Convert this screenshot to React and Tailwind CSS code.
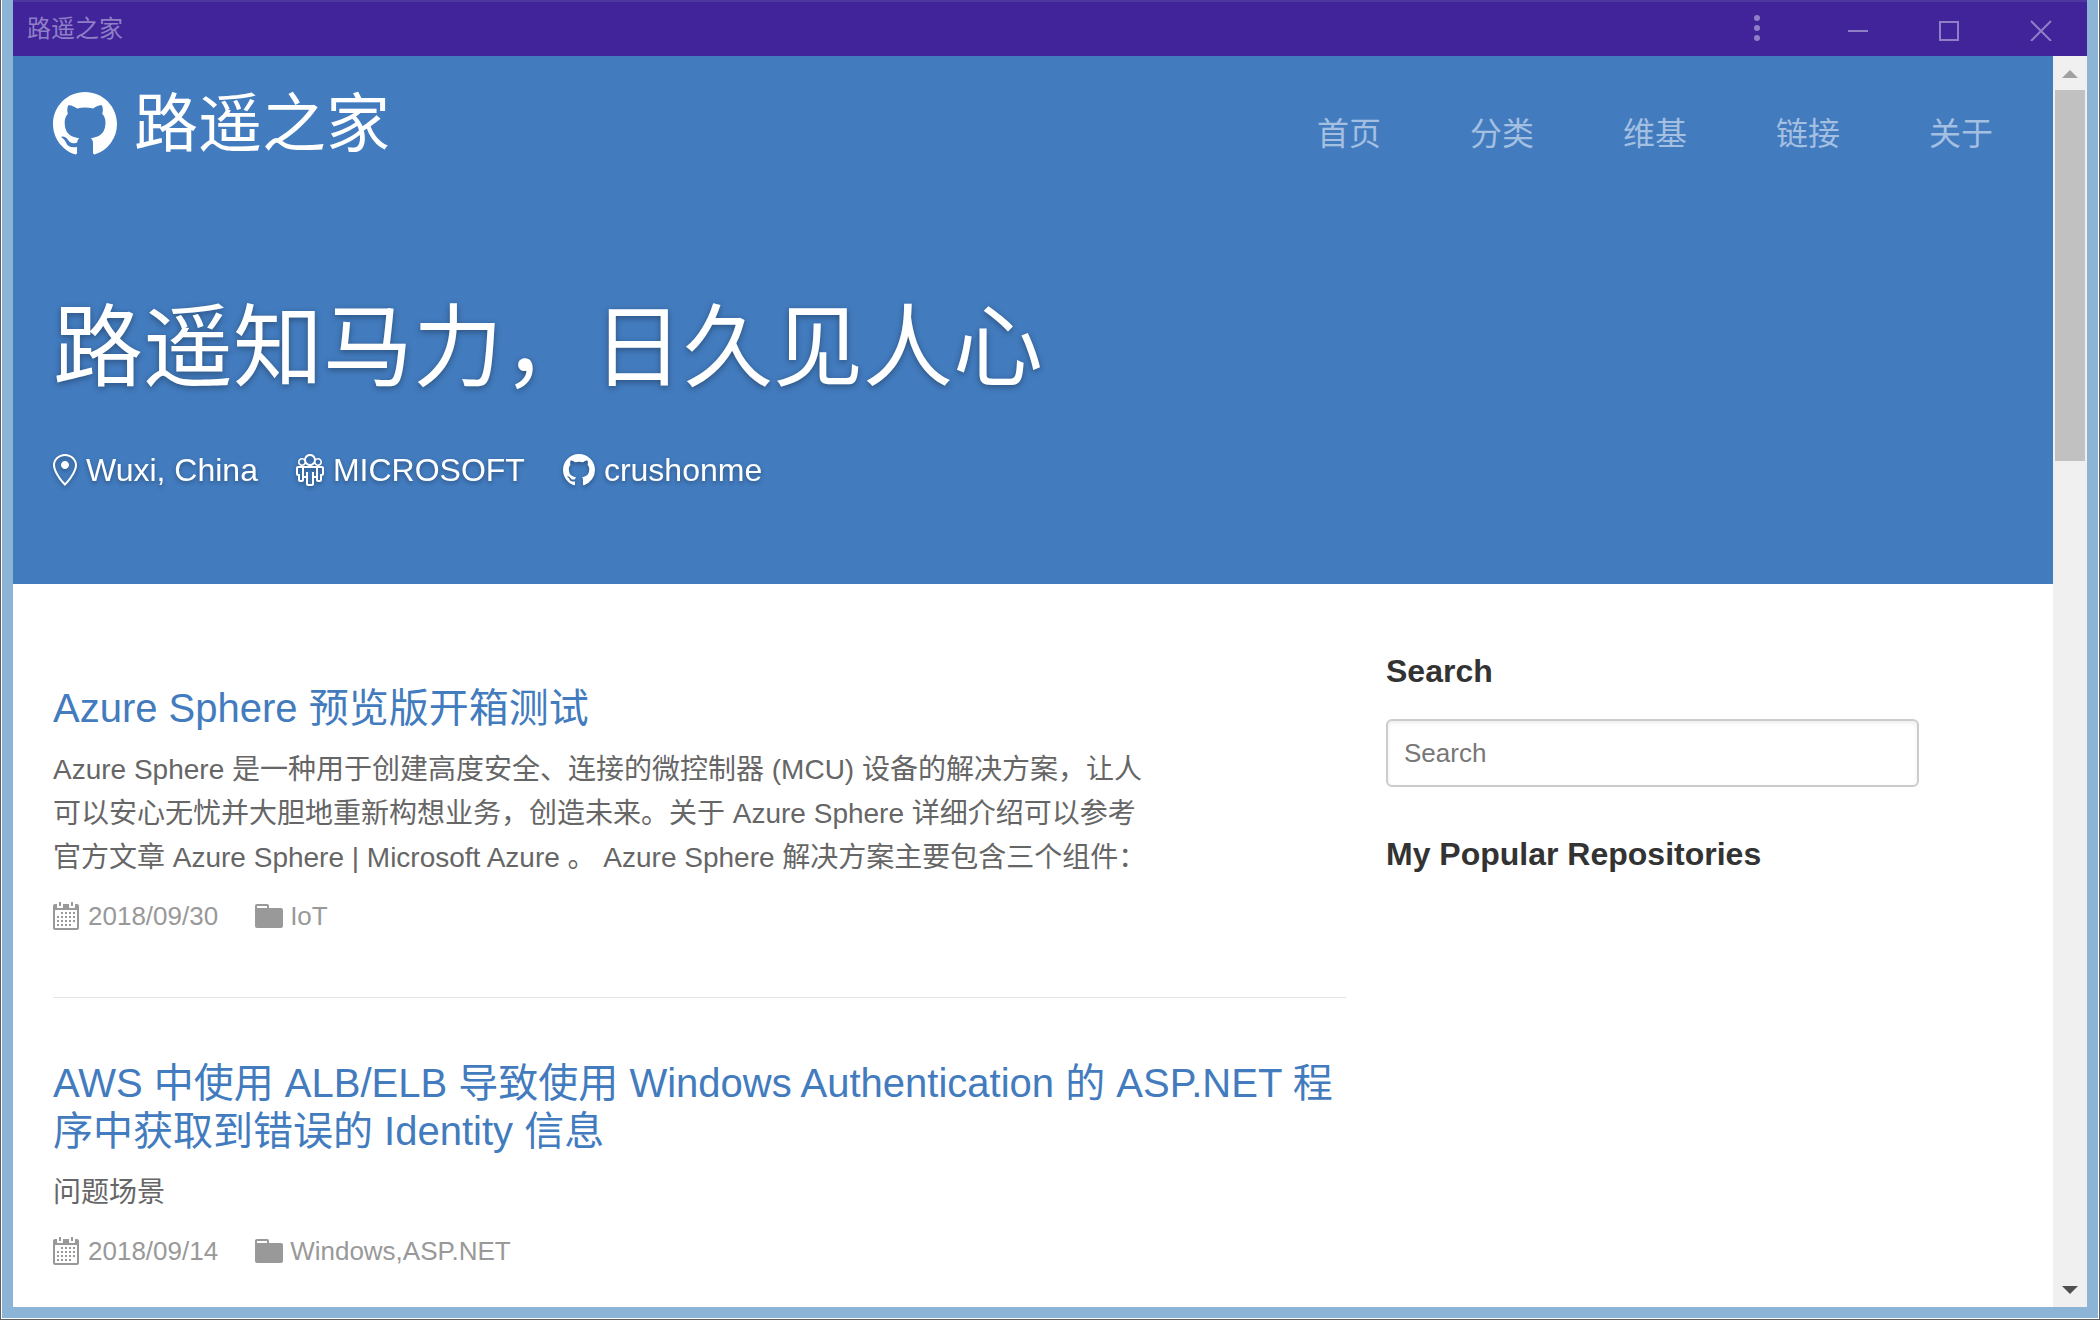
const MARK =
  "M8 0C3.58 0 0 3.58 0 8c0 3.54 2.29 6.53 5.47 7.59.4.07.55-.17.55-.38 0-.19-.01-.82-.01-1.49-2.01.37-2.53-.49-2.69-.94-.09-.23-.48-.94-.82-1.13-.28-.15-.68-.52-.01-.53.63-.01 1.08.58 1.23.82.72 1.21 1.87.87 2.33.66.07-.52.28-.87.51-1.07-1.78-.2-3.64-.89-3.64-3.95 0-.87.31-1.59.82-2.15-.08-.2-.36-1.02.08-2.12 0 0 .67-.21 2.2.82.64-.18 1.32-.27 2-.27.68 0 1.36.09 2 .27 1.53-1.04 2.2-.82 2.2-.82.44 1.1.16 1.92.08 2.12.51.56.82 1.27.82 2.15 0 3.07-1.87 3.75-3.65 3.95.29.25.54.73.54 1.48 0 1.07-.01 1.93-.01 2.2 0 .21.15.46.55.38A8.013 8.013 0 0 0 16 8c0-4.42-3.58-8-8-8z";
const LOCATION =
  "M6 0C2.69 0 0 2.5 0 5.5 0 10.02 6 16 6 16s6-5.98 6-10.5C12 2.5 9.31 0 6 0zm0 14.55C4.14 12.52 1 8.44 1 5.5 1 3.02 3.25 1 6 1c1.34 0 2.61.48 3.56 1.36.92.86 1.44 1.97 1.44 3.14 0 2.94-3.14 7.02-5 9.05zM8 5.5c0 1.11-.89 2-2 2-1.11 0-2-.89-2-2 0-1.11.89-2 2-2 1.11 0 2 .89 2 2z";
const ORGANIZATION =
  "M4.75 4.95C5.3 5.59 6.09 6 7 6c.91 0 1.7-.41 2.25-1.05A1.993 1.993 0 0 0 13 4c0-1.11-.89-2-2-2-.41 0-.77.13-1.08.33A3.01 3.01 0 0 0 7 0C5.58 0 4.39 1 4.08 2.33 3.77 2.13 3.41 2 3 2c-1.11 0-2 .89-2 2a1.993 1.993 0 0 0 3.75.95zm5.2-1.52c.2-.38.59-.64 1.05-.64.66 0 1.2.55 1.2 1.2 0 .65-.55 1.2-1.2 1.2-.65 0-1.17-.53-1.19-1.17.06-.19.11-.39.14-.59zM7 .98c1.11 0 2.02.91 2.02 2.02 0 1.11-.91 2.02-2.02 2.02-1.11 0-2.02-.91-2.02-2.02C4.98 1.89 5.89.98 7 .98zM3 5.2c-.66 0-1.2-.55-1.2-1.2 0-.65.55-1.2 1.2-1.2.45 0 .84.27 1.05.64.03.2.08.41.14.59C4.17 4.67 3.66 5.2 3 5.2zM13 6H1c-.55 0-1 .45-1 1v3c0 .55.45 1 1 1v2c0 .55.45 1 1 1h1c.55 0 1-.45 1-1v-1h1v3c0 .55.45 1 1 1h2c.55 0 1-.45 1-1v-3h1v1c0 .55.45 1 1 1h1c.55 0 1-.45 1-1v-2c.55 0 1-.45 1-1V7c0-.55-.45-1-1-1zM3 13H2v-3H1V7h2v6zm7-2H9V9H8v6H6V9H5v2H4V7h6v4zm3-1h-1v3h-1V7h2v3z";
const CALENDAR =
  "M13 2h-1v1.5c0 .28-.22.5-.5.5h-2c-.28 0-.5-.22-.5-.5V2H6v1.5c0 .28-.22.5-.5.5h-2c-.28 0-.5-.22-.5-.5V2H2c-.55 0-1 .45-1 1v11c0 .55.45 1 1 1h11c.55 0 1-.45 1-1V3c0-.55-.45-1-1-1zm0 12H2V5h11v9zM5 3H4V1h1v2zm6 0h-1V1h1v2z";
const DOTS = "M5 6h1v1H5zM7 6h1v1H7zM9 6h1v1H9zM11 6h1v1h-1zM3 8h1v1H3zM5 8h1v1H5zM7 8h1v1H7zM9 8h1v1H9zM11 8h1v1h-1zM3 10h1v1H3zM5 10h1v1H5zM7 10h1v1H7zM9 10h1v1H9zM11 10h1v1h-1zM3 12h1v1H3zM5 12h1v1H5zM7 12h1v1H7zM9 12h1v1H9z";
const FOLDER =
  "M13 4H7V3c0-.66-.31-1-1-1H1c-.55 0-1 .45-1 1v10c0 .55.45 1 1 1h12c.55 0 1-.45 1-1V5c0-.55-.45-1-1-1zM6 4H1V3h5v1z";

function Icon({ path, viewBox, className }) {
  return (
    <svg aria-hidden="true" viewBox={viewBox} className={`shrink-0 fill-current ${className}`}>
      <path fillRule="evenodd" d={path} />
    </svg>
  );
}

function TitleBar() {
  return (
    <div className="flex h-14 shrink-0 items-stretch border-t-2 border-[#4d36a0] bg-[#41239a] text-[#8f7fc6]">
      <div className="flex flex-1 items-center pl-3.5 text-2xl">路遥之家</div>
      <button aria-label="菜单" className="flex w-[110px] items-center justify-center">
        <svg className="size-8 fill-current" viewBox="0 0 32 32">
          <circle cx="17" cy="5" r="3" />
          <circle cx="17" cy="15" r="3" />
          <circle cx="17" cy="25" r="3" />
        </svg>
      </button>
      <button aria-label="最小化" className="flex w-[92px] items-center justify-center">
        <svg className="size-6 fill-none stroke-current stroke-2" viewBox="0 0 24 24"><path d="M3 14h20" /></svg>
      </button>
      <button aria-label="最大化" className="flex w-[92px] items-center justify-center">
        <svg className="size-6 fill-none stroke-current stroke-2" viewBox="0 0 24 24"><path d="M3 5h18v18H3z" /></svg>
      </button>
      <button aria-label="关闭" className="flex w-[92px] items-center justify-center">
        <svg className="size-6 fill-none stroke-current stroke-2" viewBox="0 0 24 24"><path d="M2 4l20 20M22 4L2 24" /></svg>
      </button>
    </div>
  );
}

function Header() {
  const nav = ["首页", "分类", "维基", "链接", "关于"];
  return (
    <header className="h-[528px] shrink-0 bg-[#427bbe] px-10 text-white">
      <div className="flex items-center justify-between pt-5">
        <a href="#home" className="flex items-center gap-[17px] text-[64px] leading-24">
          <Icon path={MARK} viewBox="0 0 16 16" className="size-16" />
          路遥之家
        </a>
        <nav className="flex gap-[89px] pt-5 pr-5 text-[32px] leading-12 text-[#a3bfe1]">
          {nav.map((n) => <a key={n} href="#nav">{n}</a>)}
        </nav>
      </div>
      <h1 className="mt-[108px] text-[90px] leading-[136px] [text-shadow:0_2px_6px_rgba(0,0,0,0.35)]">路遥知马力，日久见人心</h1>
      <div className="mt-[30px] flex gap-[38px] text-[32px] leading-12 [filter:drop-shadow(0_2px_2px_rgba(0,0,0,0.3))]">
        <span className="flex items-center gap-[9px]">
          <Icon path={LOCATION} viewBox="0 0 12 16" className="h-8 w-6" />Wuxi, China
        </span>
        <span className="flex items-center gap-[9px]">
          <Icon path={ORGANIZATION} viewBox="0 0 14 16" className="h-8 w-7" />MICROSOFT
        </span>
        <a href="#github" className="flex items-center gap-[9px]">
          <Icon path={MARK} viewBox="0 0 16 16" className="size-8" />crushonme
        </a>
      </div>
    </header>
  );
}

const posts = [
  {
    title: "Azure Sphere 预览版开箱测试",
    text: "Azure Sphere 是一种用于创建高度安全、连接的微控制器 (MCU) 设备的解决方案，让人可以安心无忧并大胆地重新构想业务，创造未来。关于 Azure Sphere 详细介绍可以参考官方文章 Azure Sphere | Microsoft Azure 。 Azure Sphere 解决方案主要包含三个组件：",
    date: "2018/09/30",
    tags: "IoT",
  },
  {
    title: "AWS 中使用 ALB/ELB 导致使用 Windows Authentication 的 ASP.NET 程序中获取到错误的 Identity 信息",
    text: "问题场景",
    date: "2018/09/14",
    tags: "Windows,ASP.NET",
  },
];

function Post({ post }) {
  return (
    <li className="border-b border-[#e5e5e5] py-[61px]">
      <h2 className="text-[40px] leading-12 text-[#427bbe]"><a href="#post">{post.title}</a></h2>
      <p className="mt-4 max-w-[1100px] text-[28px] leading-11 text-[#666]">{post.text}</p>
      <div className="mt-4 flex items-center gap-[37px] text-[26px] leading-10 text-[#999]">
        <span className="flex items-center gap-[9px]">
          <Icon path={CALENDAR + DOTS} viewBox="1 0 13 16" className="h-8 w-[26px]" />{post.date}
        </span>
        <a href="#category" className="flex items-center gap-[7px]">
          <Icon path={FOLDER} viewBox="0 0 14 16" className="h-8 w-7" />{post.tags}
        </a>
      </div>
    </li>
  );
}

function Scrollbar() {
  return (
    <div className="flex w-[34px] shrink-0 flex-col bg-[#f0f0f0]">
      <button aria-label="向上滚动" className="flex h-[34px] items-center justify-center pt-0.5">
        <svg className="h-2 w-4 fill-[#a0a0a0]" viewBox="0 0 16 8"><path d="M8 0l8 8H0z" /></svg>
      </button>
      <div className="mx-0.5 h-[371px] bg-[#c1c1c1]" />
      <button aria-label="向下滚动" className="mt-auto flex h-[34px] items-center justify-center">
        <svg className="h-2 w-4 fill-[#505050]" viewBox="0 0 16 8"><path d="M0 0h16L8 8z" /></svg>
      </button>
    </div>
  );
}

export default function App() {
  return (
    <div className="h-screen border border-t-0 border-[#5c6066] bg-white px-px pb-px font-['Liberation_Sans','Noto_Sans_CJK_SC',sans-serif]">
      <div className="flex h-full flex-col border-x-11 border-b-11 border-[#8bb4d7] bg-white">
        <TitleBar />
        <div className="flex min-h-0 flex-1">
          <div className="flex min-w-0 flex-1 flex-col overflow-hidden">
            <Header />
            <div className="flex gap-10 px-10">
              <ul className="min-w-0 flex-[1293] pt-[39px]">
                {posts.map((p) => <Post key={p.date} post={p} />)}
              </ul>
              <aside className="min-w-0 flex-[627] pt-[63px] text-[#333]">
                <label htmlFor="search" className="block text-[32px] leading-12 font-bold">Search</label>
                <input
                  id="search"
                  type="text"
                  placeholder="Search"
                  className="mt-6 block h-[68px] w-[85%] rounded-md border-2 border-[#ccc] px-4 text-[26px] shadow-[inset_0_2px_4px_rgba(0,0,0,0.075)] placeholder:text-[#777]"
                />
                <h3 className="mt-[43px] text-[32px] leading-12 font-bold">My Popular Repositories</h3>
              </aside>
            </div>
          </div>
          <Scrollbar />
        </div>
      </div>
    </div>
  );
}
